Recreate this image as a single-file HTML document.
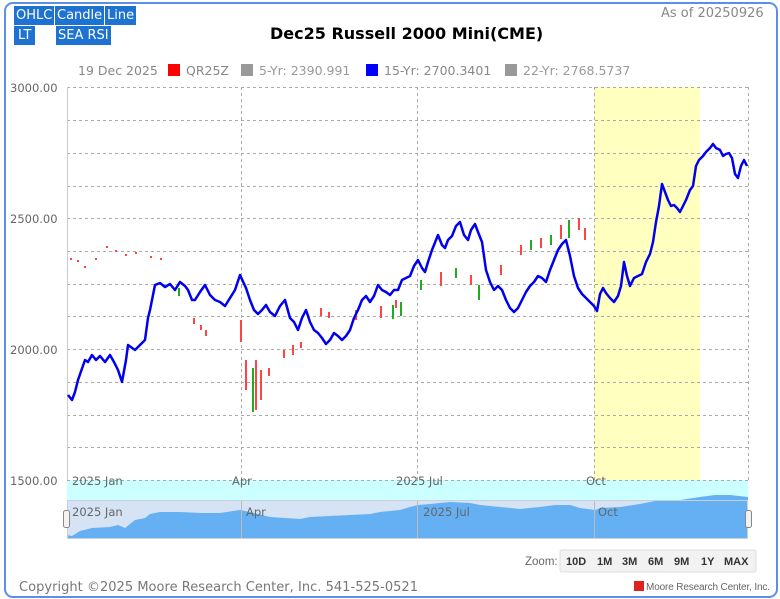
<!DOCTYPE html>
<html><head><meta charset="utf-8"><style>
body{margin:0;width:780px;height:599px;background:#fff;font-family:"DejaVu Sans","Liberation Sans",sans-serif;overflow:hidden}
.frame{position:absolute;left:4px;top:2px;width:770px;height:592px;border:2px solid #5b8fe8;border-radius:9px}
.btn{position:absolute;background:#1e73d2;color:#fff;font-size:13px;line-height:19px;height:19px;padding:0 2px}
.t{position:absolute;white-space:nowrap}
</style></head><body>
<div class="frame"></div>
<div class="btn" style="left:14px;top:6px">OHLC</div>
<div class="btn" style="left:55px;top:6px">Candle</div>
<div class="btn" style="left:105px;top:6px">Line</div>
<div class="btn" style="left:14px;top:26px;padding:0 4px">LT</div>
<div class="btn" style="left:56px;top:26px">SEA RSI</div>
<div class="t" style="left:270px;top:24px;font-size:16px;font-weight:bold;color:#000">Dec25 Russell 2000 Mini(CME)</div>
<div class="t" style="left:661px;top:6px;font-size:13px;color:#888">As of 20250926</div>
<div class="t" style="left:78px;top:63px;font-size:12.5px;color:#888">19 Dec 2025</div>
<div style="position:absolute;left:168px;top:64px;width:12px;height:12px;background:#f00"></div>
<div class="t" style="left:186px;top:63px;font-size:12.5px;color:#888">QR25Z</div>
<div style="position:absolute;left:241px;top:64px;width:12px;height:12px;background:#999"></div>
<div class="t" style="left:259px;top:63px;font-size:12.5px;color:#999">5-Yr: 2390.991</div>
<div style="position:absolute;left:366px;top:64px;width:12px;height:12px;background:#00f"></div>
<div class="t" style="left:384px;top:63px;font-size:12.5px;color:#888">15-Yr: 2700.3401</div>
<div style="position:absolute;left:505px;top:64px;width:12px;height:12px;background:#999"></div>
<div class="t" style="left:523px;top:63px;font-size:12.5px;color:#999">22-Yr: 2768.5737</div>
<svg width="780" height="599" style="position:absolute;left:0;top:0">
<rect x="594" y="87" width="106" height="393" fill="#ffffc0"/>
<g stroke="#aaa" stroke-dasharray="3,3" stroke-width="1">
<line x1="67" x2="748" y1="87.5" y2="87.5"/><line x1="67" x2="748" y1="120.5" y2="120.5"/><line x1="67" x2="748" y1="153.5" y2="153.5"/><line x1="67" x2="748" y1="186.5" y2="186.5"/><line x1="67" x2="748" y1="218.5" y2="218.5"/><line x1="67" x2="748" y1="251.5" y2="251.5"/><line x1="67" x2="748" y1="284.5" y2="284.5"/><line x1="67" x2="748" y1="316.5" y2="316.5"/><line x1="67" x2="748" y1="349.5" y2="349.5"/><line x1="67" x2="748" y1="382.5" y2="382.5"/><line x1="67" x2="748" y1="415.5" y2="415.5"/><line x1="67" x2="748" y1="447.5" y2="447.5"/>
<line x1="241.5" x2="241.5" y1="87" y2="480"/><line x1="417.5" x2="417.5" y1="87" y2="480"/><line x1="594.5" x2="594.5" y1="87" y2="480"/><line x1="748.5" x2="748.5" y1="87" y2="480"/>
</g>
<line x1="67.5" x2="67.5" y1="87" y2="480" stroke="#ccc"/>
<rect x="67" y="480" width="681" height="20" fill="#ccffff"/>
<line x1="67" x2="748" y1="480.5" y2="480.5" stroke="#aaa" stroke-dasharray="3,3"/>
<g font-size="11.5" fill="#666" font-family="DejaVu Sans,sans-serif">
<text x="10" y="92">3000.00</text><text x="10" y="223">2500.00</text><text x="10" y="354">2000.00</text><text x="10" y="485">1500.00</text>
<text x="72" y="485">2025 Jan</text><text x="232" y="485">Apr</text><text x="396" y="485">2025 Jul</text><text x="586" y="485">Oct</text>
</g>
<g fill="#f44">
<rect x="70" y="258" width="2" height="2"/><rect x="77" y="260" width="2" height="2"/><rect x="84" y="266" width="2" height="2"/><rect x="95" y="258" width="2" height="2"/><rect x="106" y="246" width="2" height="2"/><rect x="115" y="250" width="2" height="2"/><rect x="125" y="254" width="2" height="2"/><rect x="135" y="252" width="2" height="2"/><rect x="150" y="256" width="2" height="2"/><rect x="160" y="258" width="2" height="2"/>
<rect x="193" y="318" width="2" height="6"/><rect x="200" y="325" width="2" height="5"/><rect x="205" y="330" width="2" height="6"/><rect x="240" y="320" width="2" height="22"/>
<rect x="245" y="360" width="2" height="30"/><rect x="255" y="360" width="2" height="50"/><rect x="260" y="370" width="2" height="30"/><rect x="268" y="368" width="2" height="8"/><rect x="283" y="350" width="2" height="8"/><rect x="292" y="345" width="2" height="10"/><rect x="300" y="342" width="2" height="6"/><rect x="320" y="308" width="2" height="8"/><rect x="328" y="312" width="2" height="6"/><rect x="355" y="310" width="2" height="10"/><rect x="380" y="306" width="2" height="12"/><rect x="395" y="300" width="2" height="8"/>
<rect x="440" y="272" width="2" height="14"/><rect x="470" y="275" width="2" height="10"/><rect x="500" y="265" width="2" height="10"/><rect x="520" y="245" width="2" height="10"/><rect x="540" y="238" width="2" height="10"/><rect x="560" y="225" width="2" height="14"/><rect x="578" y="218" width="2" height="12"/><rect x="584" y="228" width="2" height="12"/>
</g>
<g fill="#2a2">
<rect x="178" y="288" width="2" height="8"/><rect x="252" y="368" width="2" height="44"/><rect x="392" y="305" width="2" height="14"/><rect x="400" y="302" width="2" height="14"/><rect x="420" y="280" width="2" height="10"/><rect x="455" y="268" width="2" height="10"/><rect x="478" y="285" width="2" height="15"/><rect x="530" y="240" width="2" height="10"/><rect x="550" y="235" width="2" height="10"/><rect x="568" y="220" width="2" height="18"/>
</g>
<polyline fill="none" stroke="#0000ee" stroke-width="2.5" stroke-linejoin="round" points="68,395 72,400 75,392 78,380 85,360 88,362 92,355 96,360 100,356 105,362 110,355 114,362 118,370 122,382 126,360 128,345 135,350 140,345 145,340 148,318 150,310 155,285 160,283 165,287 170,284 175,290 180,282 185,286 188,290 192,300 195,300 200,292 205,285 210,295 215,300 220,302 225,306 230,298 235,290 240,275 246,288 250,300 254,310 258,314 262,310 266,305 270,312 275,316 280,306 285,300 290,318 294,322 298,330 302,318 306,310 310,322 314,330 318,333 322,338 326,344 330,340 334,333 338,336 342,340 346,336 350,330 354,318 358,310 362,300 366,296 370,302 374,296 378,285 382,290 386,292 390,295 394,290 398,290 402,280 406,278 410,276 414,266 418,260 422,268 425,272 428,262 432,250 436,240 438,235 442,245 445,248 448,240 452,236 456,226 460,222 464,235 468,240 471,230 475,224 478,232 482,242 486,270 490,282 494,290 498,286 502,290 506,300 510,308 514,312 518,308 522,300 526,292 530,286 534,282 538,276 542,278 546,282 550,270 554,260 558,250 562,244 566,240 570,256 574,276 578,288 582,294 586,298 590,302 594,306 597,311 600,294 603,288 606,293 610,298 614,302 618,296 621,286 624,262 627,276 630,286 634,278 638,276 642,274 646,262 650,254 653,242 656,222 659,206 662,184 665,192 668,200 671,206 674,205 677,208 680,212 683,206 686,200 690,190 693,186 696,166 699,160 703,156 706,152 710,148 713,144 716,148 720,150 723,156 726,154 729,153 732,158 735,174 738,178 741,166 744,160 747,166"/>
<rect x="67" y="500" width="681" height="39" fill="#d5e3f5"/>
<path fill="#64b0f2" d="M67,539 L67,535 L72,536 L80,531 L92,528 L110,527 L118,525 L125,528 L135,520 L145,518 L150,514 L160,512 L180,512 L200,513 L220,513 L240,510 L250,512 L270,517 L300,519 L310,517 L330,516 L350,515 L370,514 L380,512 L400,510 L410,507 L418,505 L430,504 L450,502 L470,503 L480,505 L500,507 L520,509 L540,507 L555,505 L570,505 L580,508 L595,510 L600,508 L620,507 L640,504 L660,500 L680,500 L700,497 L715,495 L730,495 L748,497 L748,539 Z"/>
<g stroke="#bbb"><line x1="241.5" x2="241.5" y1="500" y2="539"/><line x1="417.5" x2="417.5" y1="500" y2="539"/><line x1="594.5" x2="594.5" y1="500" y2="539"/></g>
<rect x="67.5" y="500.5" width="680" height="38" fill="none" stroke="#c8d0dc"/>
<rect x="63.5" y="510.5" width="6" height="17" rx="2" fill="#f2f2f2" stroke="#888"/>
<rect x="745.5" y="510.5" width="6" height="17" rx="2" fill="#f2f2f2" stroke="#888"/>
<g font-size="11.5" fill="#666" font-family="DejaVu Sans,sans-serif">
<text x="72" y="516">2025 Jan</text><text x="246" y="516">Apr</text><text x="423" y="516">2025 Jul</text><text x="598" y="516">Oct</text>
</g>
<text x="525" y="565" font-size="11.5" fill="#666" font-family="Liberation Sans,sans-serif">Zoom:</text>
<g font-size="11" font-weight="bold" fill="#333" font-family="Liberation Sans,sans-serif">
<rect x="560" y="550" width="196" height="22" rx="2" fill="#f2f2f2" stroke="#ddd"/>
<text x="566" y="565">10D</text><text x="597" y="565">1M</text><text x="622" y="565">3M</text><text x="648" y="565">6M</text><text x="674" y="565">9M</text><text x="701" y="565">1Y</text><text x="724" y="565">MAX</text>
</g>
<text x="19" y="591" font-size="13" fill="#777" font-family="DejaVu Sans,sans-serif" textLength="399">Copyright ©2025 Moore Research Center, Inc. 541-525-0521</text>
<rect x="634" y="581" width="10" height="10" fill="#d22"/>
<text x="646" y="590" font-size="10" fill="#666" font-family="Liberation Sans,sans-serif" textLength="124">Moore Research Center, Inc.</text>
</svg>
</body></html>
